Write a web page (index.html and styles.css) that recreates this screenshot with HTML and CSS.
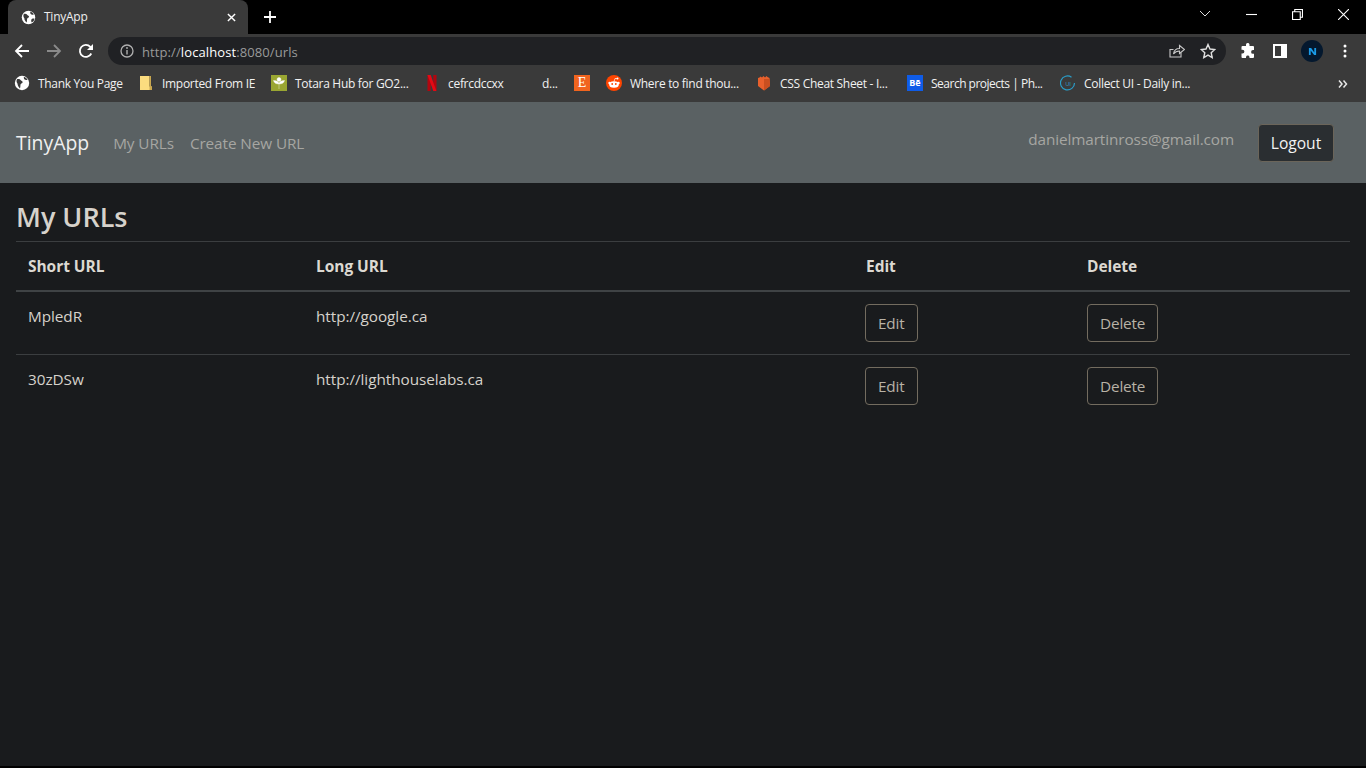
FILE: index.html
```html
<!DOCTYPE html>
<html lang="en">
<head>
<meta charset="utf-8">
<title>TinyApp</title>
<link rel="stylesheet" href="styles.css">
</head>
<body>
<div class="chrome">
  <div class="tabstrip">
    <div class="tab">
      <svg class="ic16" viewBox="0 0 16 16"><circle cx="8" cy="8" r="7.2" fill="#fff"/><path d="M3 4.200c1.600-.4 3-.1 3.800 1 .6.900 1.900.7 1.800 2-.1 1.100-1.500 1.100-2 2-.4.800.1 2-.6 4.200C4.500 12 3.300 10 3.600 8.800 2.800 7.500 2 6.300 3 4.200zM9.800 1.700c1.700.5 3 1.500 3.800 3-1 .6-2.600.4-3.300-.4-.5-.7-.4-1.800-.5-2.600zM11.500 9.500c1-.3 2.100-.4 2.900-.2-.3 1.700-1.300 3.100-2.800 4-.9-.8-1-3.100-.1-3.800z" fill="#3a3a3a"/></svg>
      <span class="tabtitle">TinyApp</span>
      <svg class="tabx" viewBox="0 0 10 10"><path d="M1 1l8 8M9 1l-8 8" stroke="#fff" stroke-width="1.600" fill="none"/></svg>
    </div>
    <svg class="newtab" viewBox="0 0 12 12"><path d="M6 0v12M0 6h12" stroke="#fff" stroke-width="1.800" fill="none"/></svg>
    <div class="winctl">
      <svg class="wc chev" viewBox="0 0 12 8"><path d="M1 1l5 5 5-5" stroke="#ddd" fill="none"/></svg>
      <svg class="wc" viewBox="0 0 10 10"><path d="M0 5h10" stroke="#fff" fill="none"/></svg>
      <svg class="wc" viewBox="0 0 10 10"><path d="M.5 2.500h7v7h-7zM2.500 2.500V.5h7v7h-2" stroke="#fff" fill="none"/></svg>
      <svg class="wc" viewBox="0 0 10 10"><path d="M0 0l10 10M10 0L0 10" stroke="#fff" fill="none"/></svg>
    </div>
  </div>
  <div class="toolbar">
    <svg class="nav-ic" viewBox="0 0 16 16"><path d="M15 8H2M8 2L2 8l6 6" stroke="#fff" stroke-width="1.800" fill="none"/></svg>
    <svg class="nav-ic" viewBox="0 0 16 16"><path d="M1 8h13M8 2l6 6-6 6" stroke="#8a8a8a" stroke-width="1.800" fill="none"/></svg>
    <svg class="nav-ic" viewBox="0 0 16 16"><path d="M13.300 10.500A6 6 0 1 1 12.300 3.800L14 5.500" stroke="#fff" stroke-width="1.800" fill="none"/><path d="M15 1v6H9z" fill="#fff"/></svg>
    <div class="omnibox">
      <svg class="info" viewBox="0 0 14 14"><circle cx="7" cy="7" r="6" stroke="#b0b0b0" stroke-width="1.300" fill="none"/><path d="M7 6v4.500" stroke="#b0b0b0" stroke-width="1.400"/><circle cx="7" cy="4" r=".9" fill="#b0b0b0"/></svg>
      <span class="url"><span class="dim">http://</span>localhost<span class="dim">:8080/urls</span></span>
      <svg class="omni-r" viewBox="0 0 16 16"><path d="M12 9.500V14H1V6.500h3.500" stroke="#c8c8c8" stroke-width="1.100" fill="none"/><path d="M4.500 11C5 7.500 7.500 5.500 10.500 5.500V2.500L15.500 6.500 10.500 10.500V8C8 8 6 9 4.500 11z" stroke="#c8c8c8" stroke-width="1.100" fill="none"/></svg>
      <svg class="omni-r star" viewBox="0 0 16 16"><path d="M8 1.500l2 4.500 4.800.5-3.600 3.200 1 4.800L8 12.100l-4.200 2.400 1-4.800L1.200 6.500 6 6z" stroke="#e0e0e0" stroke-width="1.400" fill="none"/></svg>
    </div>
    <svg class="ext" viewBox="0 0 16 16"><path d="M6 1.500a1.800 1.800 0 0 1 3.500 0V3h3.500a1 1 0 0 1 1 1v3h-1a1.900 1.900 0 0 0 0 3.800h1V14a1 1 0 0 1-1 1H9.500v-1a1.800 1.800 0 0 0-3.500 0v1H2.500a1 1 0 0 1-1-1V10.500h1a1.900 1.900 0 0 0 0-3.800h-1V4a1 1 0 0 1 1-1H6z" fill="#fff"/></svg>
    <svg class="side" viewBox="0 0 14 14"><path d="M0 0h14v14H0z" fill="#fff"/><path d="M2 2h6v10H2z" fill="#3a3a3a"/></svg>
    <span class="avatar"><svg viewBox="0 0 10 10"><path d="M1 1h2.500L7 6V1h2v8H6.800L3 4v5H1z" fill="#1a9be8"/></svg></span>
    <svg class="kebab" viewBox="0 0 4 14"><circle cx="2" cy="2" r="1.500" fill="#fff"/><circle cx="2" cy="7" r="1.500" fill="#fff"/><circle cx="2" cy="12" r="1.500" fill="#fff"/></svg>
  </div>
  <div class="bookmarks">
    <span class="bm"><svg class="fav" viewBox="0 0 16 16"><circle cx="8" cy="8" r="7.200" fill="#fff"/><path d="M3 4.200c1.600-.4 3-.1 3.800 1 .6.900 1.900.7 1.800 2-.1 1.100-1.500 1.100-2 2-.4.800.1 2-.6 4.200C4.500 12 3.300 10 3.600 8.800 2.800 7.500 2 6.300 3 4.200zM9.800 1.700c1.700.5 3 1.500 3.800 3-1 .6-2.600.4-3.300-.4-.5-.7-.4-1.800-.5-2.600z" fill="#3a3a3a"/></svg><span class="bt t1">Thank You Page</span></span>
    <span class="bm"><svg class="fav" viewBox="0 0 16 16"><path d="M2 1h9.500v10.500H14V15H2z" fill="#fbdc7f"/><path d="M11.500 1h1.500v10.500h-1.500zM11.500 11.500H14V15h-2.500z" fill="#caa84f"/></svg><span class="bt t2">Imported From IE</span></span>
    <span class="bm"><svg class="fav" viewBox="0 0 16 16"><path d="M0 0h16v16H0z" fill="#9aa632"/><path d="M8 14V9M8 9C5 9 3 8 2.500 5.500 6 5.500 8 7 8 9zM8 9c3 0 5-1 5.500-3.500C10 5.500 8 7 8 9zM8 6.500A2 2 0 0 1 8 2.500a2 2 0 0 1 0 4z" fill="#fff" stroke="#fff" stroke-width=".4"/></svg><span class="bt t3">Totara Hub for GO2...</span></span>
    <span class="bm"><svg class="fav" viewBox="0 0 16 16"><path d="M3.500 0h3.200v16l-3.200.4z" fill="#b1060f"/><path d="M9.300 0h3.200v16.400l-3.200-.4z" fill="#b1060f"/><path d="M3.500 0h3.200l5.800 16.400-3.200-.4z" fill="#e50914"/></svg><span class="bt t4">cefrcdccxx</span></span>
    <span class="bm bm5"><span class="bt t5">d...</span></span>
    <span class="bm"><span class="etsy">E</span></span>
    <span class="bm"><svg class="fav" viewBox="0 0 16 16"><circle cx="8" cy="8" r="8" fill="#ff4500"/><ellipse cx="8" cy="9.500" rx="4.800" ry="3.200" fill="#fff"/><circle cx="3.500" cy="8" r="1.200" fill="#fff"/><circle cx="12.500" cy="8" r="1.200" fill="#fff"/><circle cx="11.500" cy="3.500" r="1" fill="#fff"/><path d="M8 6.500l1-3 2.500.2" stroke="#fff" stroke-width=".7" fill="none"/><circle cx="6.200" cy="9" r=".9" fill="#ff4500"/><circle cx="9.800" cy="9" r=".9" fill="#ff4500"/></svg><span class="bt t6">Where to find thou...</span></span>
    <span class="bm"><svg class="fav" viewBox="0 0 16 16"><path d="M2 3l1.500-.5L4.500 1.500l1.500 1 1.500-1.500 1.500 1.500 1.500-1.500 1 1L13.500 3 14 11l-6 4.500L2 11z" fill="#e8602c"/><path d="M8 4v11.500L14 11l-.5-7z" fill="#c94f20"/></svg><span class="bt t7">CSS Cheat Sheet - I...</span></span>
    <span class="bm"><span class="behance">Bē</span><span class="bt t8">Search projects | Ph...</span></span>
    <span class="bm"><svg class="fav" viewBox="0 0 16 16"><path d="M11.500 2.200A7 7 0 1 0 14.500 8" stroke="#2a9dc8" stroke-width="1.200" fill="none"/><text x="8" y="10.500" class="favtext">UI</text></svg><span class="bt t9">Collect UI - Daily in...</span></span>
    <svg class="more" viewBox="0 0 10 8"><path d="M1 .5L4 4 1 7.500M5.500 .5L8.500 4l-3 3.500" stroke="#e8e8e8" stroke-width="1.500" fill="none"/></svg>
  </div>
</div>
<main class="page">
  <nav class="navbar">
    <a class="brand">TinyApp</a>
    <a class="navlink first">My URLs</a>
    <a class="navlink">Create New URL</a>
    <span class="email">danielmartinross@gmail.com</span>
    <button class="logout">Logout</button>
  </nav>
  <section class="content">
    <h1 class="title">My URLs</h1>
    <table class="urls">
      <colgroup><col class="c1"><col class="c2"><col class="c3"><col class="c4"></colgroup>
      <thead>
        <tr><th>Short URL</th><th>Long URL</th><th>Edit</th><th>Delete</th></tr>
      </thead>
      <tbody>
        <tr><td>MpledR</td><td>http://google.ca</td><td><button class="btn">Edit</button></td><td><button class="btn">Delete</button></td></tr>
        <tr class="last"><td>30zDSw</td><td>http://lighthouselabs.ca</td><td><button class="btn">Edit</button></td><td><button class="btn">Delete</button></td></tr>
      </tbody>
    </table>
  </section>
</main>
</body>
</html>
```
FILE: styles.css
```css
* { box-sizing: border-box; }
html, body { margin: 0; height: 100%; }
body {
  width: 1366px; height: 768px; overflow: hidden;
  display: flex; flex-direction: column;
  background: #000;
  font-family: "Open Sans", "Noto Sans", sans-serif;
}
.chrome { flex: none; font-family: "Open Sans", sans-serif; }
.tabstrip { height: 34px; background: #000; display: flex; align-items: flex-start; }
.tab {
  width: 240px; height: 34px; margin-left: 8px; padding: 0 0 0 13px;
  background: #3a3a3a; border-radius: 8px 8px 0 0;
  display: flex; align-items: center;
}
.ic16 { width: 15px; height: 15px; }
.tabtitle { margin-left: 8px; margin-top: -1px; color: #eee; font-size: 12px; flex: 1; letter-spacing: -.25px; }
.tabx { width: 9px; height: 9px; margin-right: 12px; }
.newtab { width: 12px; height: 12px; margin: 11px 0 0 16px; }
.winctl { margin-left: auto; display: flex; align-items: center; height: 28px; }
.wc { width: 11px; height: 11px; margin-right: 35px; }
.wc.chev { width: 12px; height: 8px; margin-right: 35px; }
.wc:last-child { margin-right: 17px; }

.toolbar { height: 34px; background: #3a3a3a; display: flex; align-items: center; padding-left: 14px; }
.nav-ic { width: 16px; height: 16px; margin-right: 16px; }
.omnibox {
  width: 1118px; height: 28px; margin-left: -2px; border-radius: 14px; background: #202124;
  display: flex; align-items: center; padding-left: 12px;
}
.info { width: 14px; height: 14px; }
.url { margin-left: 8px; padding-top: 1px; font-size: 13px; color: #fff; flex: 1; letter-spacing: .1px; }
.dim { color: #9a9a9a; }
.omni-r { width: 16px; height: 16px; margin-right: 15px; }
.omni-r.star { margin-right: 10px; }
.ext { width: 16px; height: 16px; margin-left: 14px; }
.side { width: 14px; height: 14px; margin-left: 17px; }
.avatar {
  width: 22px; height: 22px; margin-left: 14px; border-radius: 50%; background: #04182e;
  display: flex; align-items: center; justify-content: center;
}
.avatar svg { width: 9px; height: 9px; }
.kebab { width: 4px; height: 14px; margin-left: 20px; }

.bookmarks { height: 34px; padding: 0 0 4px 14px; background: #3a3a3a; position: relative; display: flex; align-items: center; gap: 16px; }
.bm { display: flex; align-items: center; color: #f1f1f1; font-size: 12px; white-space: nowrap; letter-spacing: -.3px; }
.bt { display: block; }
.t1 { width: 84px; } .t2 { width: 93px; } .t3 { width: 113px; } .t4 { width: 55px; }
.t5 { width: 16px; } .t6 { width: 110px; } .t7 { width: 111px; } .t8 { width: 113px; letter-spacing: -.5px; } .t9 { width: 111px; }
.fav { width: 16px; height: 16px; margin-right: 8px; flex: none; }
.favtext { font: 6px "Open Sans", sans-serif; fill: #2a9dc8; text-anchor: middle; }
.etsy {
  width: 16px; height: 16px; background: #f1641e; color: #fff;
  font: 14px/16px "Liberation Serif", serif; text-align: center;
}
.behance {
  width: 16px; height: 16px; margin-right: 8px; background: #0f5ce8; color: #fff;
  font: bold 9px/16px "Open Sans", sans-serif; text-align: center; letter-spacing: 0;
}
.bm5 { margin-left: 23px; }
.more { position: absolute; right: 18px; top: 12px; width: 10px; height: 8px; }

.page { height: 664px; flex: none; background: #191b1d; color: #d6d2cb; }
.navbar {
  height: 81px; background: #5a6163;
  display: flex; align-items: center; padding: 0 32px 0 16px;
}
.brand { font-size: 19.4px; color: #f0f0f0; margin-right: 16px; }
.navlink { font-size: 15.3px; letter-spacing: -.08px; color: #a6a6a2; margin-left: 16px; }
.navlink.first { margin-left: 8px; }
.email { margin-left: auto; margin-right: 24px; font-size: 15.3px; letter-spacing: -.1px; color: #a6a6a2; position: relative; top: -4px; }
.logout {
  width: 76px; height: 38px; background: #2a2e31; color: #f3f3f3;
  border: 1px solid #6b655a; border-radius: 4px; font: 15.6px "Open Sans", sans-serif; padding: 0;
}
.content { padding: 0 16px; }
.title { margin: 0; height: 58px; padding-top: 16px; font-size: 27px; line-height: 36px; font-weight: 600; color: #d6d2cb; }
.urls { width: 100%; table-layout: fixed; border-collapse: collapse; border-top: 1px solid #3b3e40; font-size: 15.3px; letter-spacing: -.05px; }
.c1 { width: 288px; } .c2 { width: 550px; } .c3 { width: 221px; } .c4 { width: 275px; }
.urls th { height: 49px; padding: 0 12px; text-align: left; font-weight: 700; font-size: 15.5px; border-bottom: 2px solid #3f4345; color: #dcd9d2; }
.urls td { height: 63px; padding: 12px; vertical-align: top; border-bottom: 1px solid #3b3e40; line-height: 24px; }
.urls .last td { border-bottom: 0; }
.btn {
  display: block; height: 38px; padding: 0 12px; background: transparent; color: #b8b2a6;
  border: 1px solid #736c5f; border-radius: 4px; font: 15.3px "Open Sans", sans-serif; letter-spacing: -.15px;
}
td:nth-child(3) .btn { margin-left: -1px; }
```
